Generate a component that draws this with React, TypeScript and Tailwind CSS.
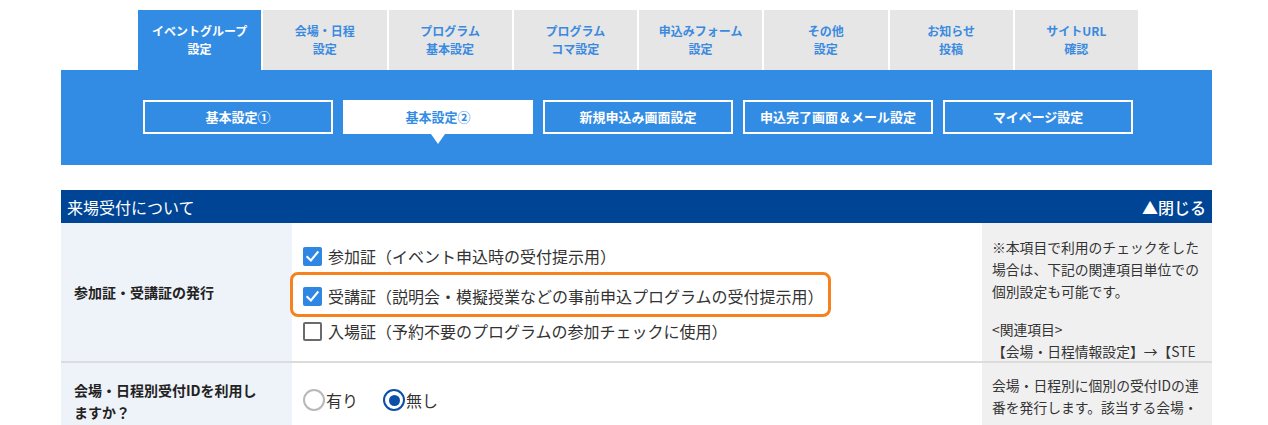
import React from "react";

const JP = { fontFamily: '"Noto Sans CJK JP", "Noto Sans", sans-serif' };

const tabs = [
  ["イベントグループ", "設定"],
  ["会場・日程", "設定"],
  ["プログラム", "基本設定"],
  ["プログラム", "コマ設定"],
  ["申込みフォーム", "設定"],
  ["その他", "設定"],
  ["お知らせ", "投稿"],
  ["サイトURL", "確認"],
];

const subButtons = ["基本設定①", "基本設定②", "新規申込み画面設定", "申込完了画面＆メール設定", "マイページ設定"];

function CheckBox({ checked }: { checked: boolean }) {
  if (checked) {
    return (
      <span className="flex h-[19px] w-[19px] shrink-0 items-center justify-center rounded-[2px] bg-[#2f87e3]">
        <svg width="15" height="15" viewBox="0 0 16 16" fill="none">
          <path d="M2.5 8.5 L6.3 12.2 L13.5 3.5" stroke="white" strokeWidth="2.2" strokeLinecap="square" />
        </svg>
      </span>
    );
  }
  return <span className="h-[19px] w-[19px] shrink-0 rounded-[2px] border-2 border-[#6b6b6b] bg-white" />;
}

function Radio({ checked }: { checked: boolean }) {
  return checked ? (
    <span className="flex h-[22px] w-[22px] items-center justify-center rounded-full border-[2.5px] border-[#0b4fa8] bg-white">
      <span className="h-[11px] w-[11px] rounded-full bg-[#0b4fa8]" />
    </span>
  ) : (
    <span className="h-[22px] w-[22px] rounded-full border-2 border-[#b8b8b8] bg-white" />
  );
}

export default function App() {
  return (
    <div className="h-[425px] w-[1268px] overflow-hidden bg-white" style={JP}>
      <div className="ml-[61px] w-[1151px]">
        {/* main tabs */}
        <div className="flex gap-[2px] pl-[77px] pt-[10px]">
          {tabs.map((t, i) => (
            <div
              key={i}
              className={`flex h-[60px] w-[123.25px] flex-col items-center justify-center text-[12px] font-bold leading-[18px] ${
                i === 0 ? "bg-[#338ce4] text-white" : "bg-[#e6e6e6] text-[#3a8ae0]"
              }`}
            >
              <span>{t[0]}</span>
              <span>{t[1]}</span>
            </div>
          ))}
        </div>

        {/* sub navigation */}
        <div className="flex h-[95px] gap-[10px] bg-[#338ce4] pl-[82px] pt-[30px]">
          {subButtons.map((b, i) => (
            <div key={i} className="relative h-[34px] w-[190px]">
              <div
                className={`flex h-full w-full items-center justify-center text-[13px] font-bold ${
                  i === 1 ? "bg-white text-[#338ce4]" : "border-2 border-white text-white"
                }`}
              >
                {b}
              </div>
              {i === 1 && (
                <div className="absolute left-1/2 top-[34px] h-0 w-0 -translate-x-1/2 border-x-[7px] border-t-[10px] border-x-transparent border-t-white" />
              )}
            </div>
          ))}
        </div>

        {/* section */}
        <div className="mt-[25px]">
          <div className="flex h-[33px] items-center justify-between bg-[#004595] px-[6px] text-[16px] text-white">
            <span>来場受付について</span>
            <span className="font-medium">▲閉じる</span>
          </div>

          <div className="flex h-[140px] border-b-2 border-[#dcdcdc]">
            <div className="flex w-[231px] items-center bg-[#eef2f9] pl-[13px] text-[14px] font-bold text-[#222]">
              参加証・受講証の発行
            </div>
            <div className="relative flex flex-1 flex-col pl-[11px] pt-[22px] text-[16px] text-[#333]">
              <div className="flex h-[22px] items-center gap-[6px]">
                <CheckBox checked />
                <span>参加証（イベント申込時の受付提示用）</span>
              </div>
              <div className="mt-[18px] flex h-[22px] items-center gap-[6px]">
                <CheckBox checked />
                <span>受講証（説明会・模擬授業などの事前申込プログラムの受付提示用）</span>
              </div>
              <div className="mt-[13px] flex h-[22px] items-center gap-[6px]">
                <CheckBox checked={false} />
                <span>入場証（予約不要のプログラムの参加チェックに使用）</span>
              </div>
              <div className="pointer-events-none absolute left-[-2px] top-[49px] h-[45px] w-[541px] rounded-[8px] border-[3px] border-[#f5821f]" />
            </div>
            <div className="w-[230px] bg-[#f0f0f0] pl-[10px] pt-[13px] text-[13.8px] leading-[22px] text-[#333]">
              <div className="w-[210px] overflow-hidden whitespace-nowrap">
                <div>※本項目で利用のチェックをした</div>
                <div>場合は、下記の関連項目単位での</div>
                <div>個別設定も可能です。</div>
                <div className="h-[16px]" />
                <div>&lt;関連項目&gt;</div>
                <div>【会場・日程情報設定】→【STE</div>
              </div>
            </div>
          </div>

          <div className="flex h-[70px]">
            <div className="w-[231px] bg-[#eef2f9] pl-[13px] pt-[16px] text-[14px] font-bold leading-[22px] text-[#222]">
              会場・日程別受付IDを利用し
              <br />
              ますか？
            </div>
            <div className="flex flex-1 items-start gap-[25px] pl-[11px] pt-[25px] text-[16px] text-[#333]">
              <label className="flex items-center gap-[1px]">
                <Radio checked={false} />
                <span>有り</span>
              </label>
              <label className="flex items-center gap-[1px]">
                <Radio checked />
                <span>無し</span>
              </label>
            </div>
            <div className="w-[230px] bg-[#f0f0f0] pl-[10px] pt-[11px] text-[13.8px] leading-[22px] text-[#333]">
              <div className="w-[210px] overflow-hidden whitespace-nowrap">
                <div>会場・日程別に個別の受付IDの連</div>
                <div>番を発行します。該当する会場・</div>
              </div>
            </div>
          </div>
        </div>
      </div>
    </div>
  );
}
